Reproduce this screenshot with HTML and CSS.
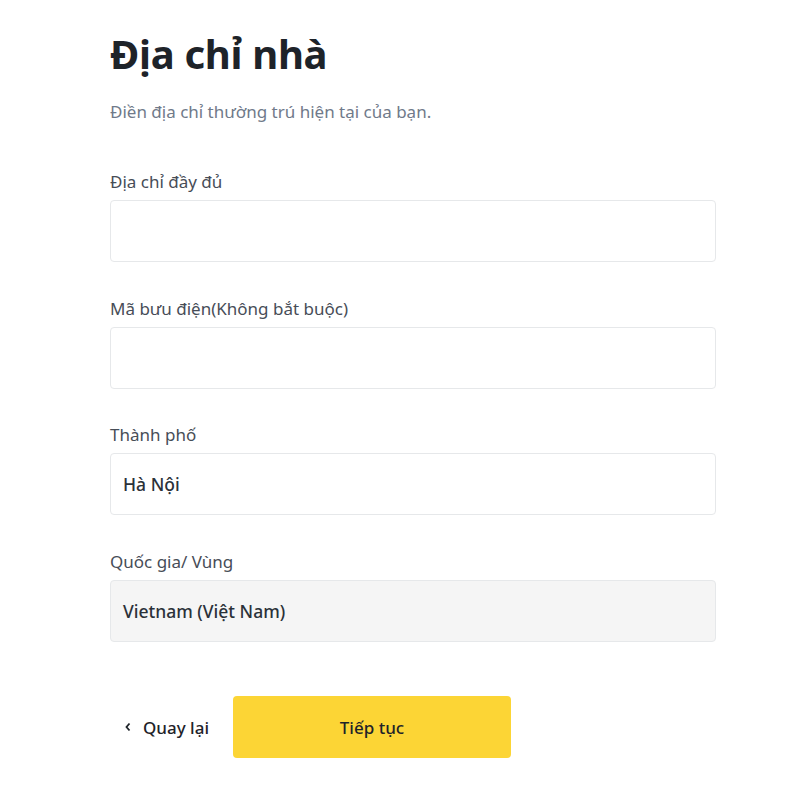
FILE: index.html
```html
<!DOCTYPE html>
<html lang="vi">
<head>
    <meta charset="UTF-8">
    <meta name="viewport" content="width=device-width, initial-scale=1.0">
    <title>Địa chỉ nhà</title>
    <link rel="stylesheet" href="styles.css">
</head>
<body>
    <div class="container">
        <h1 class="title">Địa chỉ nhà</h1>
        <p class="subtitle">Điền địa chỉ thường trú hiện tại của bạn.</p>

        <div class="field">
            <label>Địa chỉ đầy đủ</label>
            <div class="input"></div>
        </div>

        <div class="field">
            <label>Mã bưu điện(Không bắt buộc)</label>
            <div class="input"></div>
        </div>

        <div class="field">
            <label>Thành phố</label>
            <div class="input">Hà Nội</div>
        </div>

        <div class="field">
            <label>Quốc gia/ Vùng</label>
            <div class="input disabled">Vietnam (Việt Nam)</div>
        </div>

        <div class="actions">
            <button class="back">
                <svg width="8" height="10" viewBox="0 0 8 10"><path d="M5.5 1.5 L2.5 5 L5.5 8.5" fill="none" stroke="#1e2329" stroke-width="1.8"/></svg>
                Quay lại
            </button>
            <button class="next">Tiếp tục</button>
        </div>
    </div>
</body>
</html>
```

FILE: styles.css
```css
body {
    margin: 0;
    background: #ffffff;
    font-family: "Noto Sans", "Open Sans", sans-serif;
    color: #1e2329;
}
.container {
    width: 606px;
    padding: 26px 0 0 110px;
}
.title {
    font-size: 40px;
    font-weight: 700;
    margin: 0;
    line-height: 56px;
    letter-spacing: -0.3px;
}
.subtitle {
    margin: 18px 0 46px;
    font-size: 17px;
    line-height: 24px;
    color: #707a8a;
}
.field {
    margin-bottom: 34.7px;
}
.field label {
    display: block;
    font-size: 17px;
    line-height: 24px;
    color: #474d57;
    margin-bottom: 6px;
}
.input {
    border: 1px solid #e6e8ea;
    border-radius: 4px;
    box-sizing: border-box;
    height: 62px;
    padding: 0 12px;
    display: flex;
    align-items: center;
    font-size: 17.5px;
    font-weight: 500;
    color: #2b3139;
}
.input.disabled {
    background: #f5f5f5;
}
.actions {
    display: flex;
    align-items: center;
    margin-top: 54px;
}
.back {
    background: none;
    border: none;
    font-family: inherit;
    font-size: 17px;
    font-weight: 500;
    color: #1e2329;
    padding: 0 12px 0 14px;
    display: flex;
    align-items: center;
    gap: 11px;
    cursor: pointer;
}
.next {
    margin-left: 12px;
    width: 278px;
    height: 62px;
    background: #fcd535;
    border: none;
    border-radius: 4px;
    font-family: inherit;
    font-size: 17px;
    font-weight: 500;
    color: #1e2329;
    cursor: pointer;
}
```
